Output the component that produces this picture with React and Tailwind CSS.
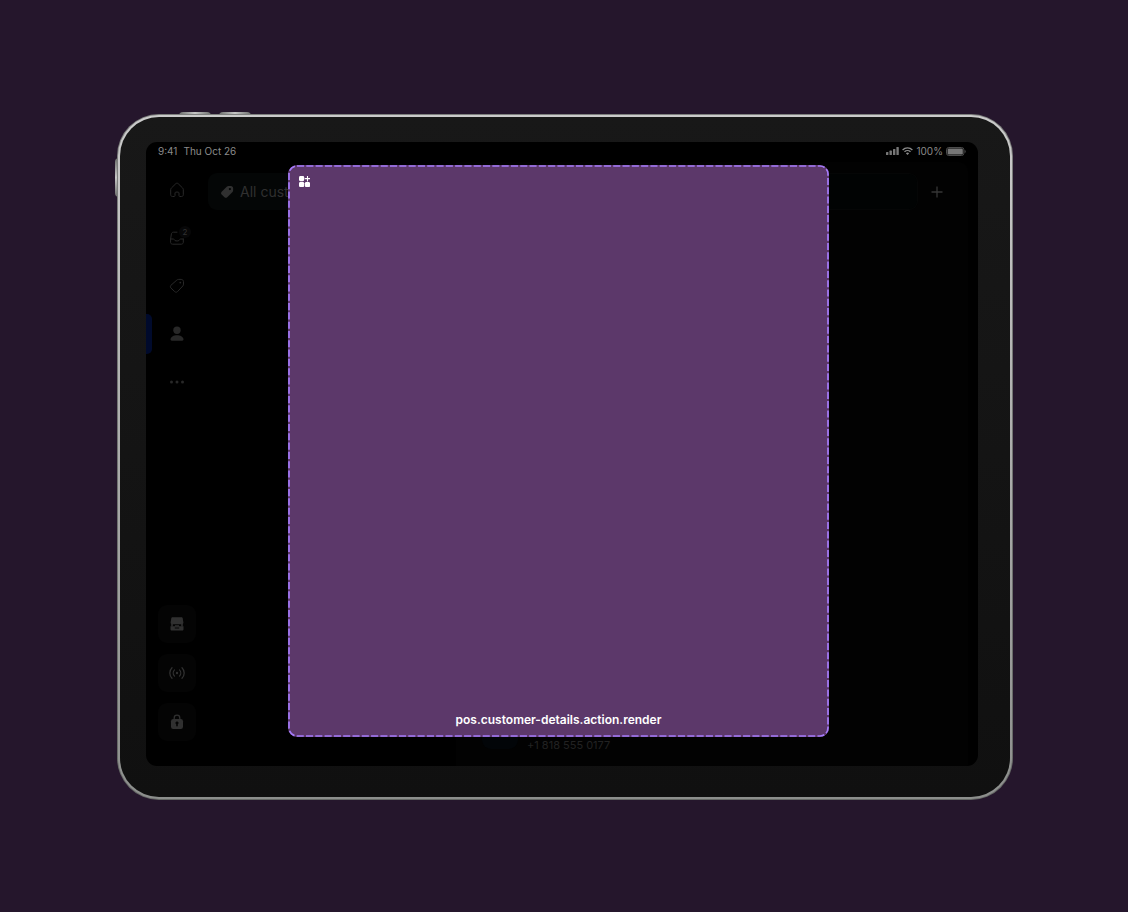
// PURPOSE:
// Shows where the customer details modal extension renders
// on top of the point of sale app, inside a tablet frame.

const navItems = [
  { label: "Home", icon: <HomeIcon /> },
  { label: "Orders", icon: <InboxIcon />, badge: "2" },
  { label: "Products", icon: <TagIcon /> },
  { label: "Customers", icon: <PersonIcon />, active: true },
  { label: "More", icon: <DotsIcon /> },
];

const toolItems = [
  { label: "Register", icon: <RegisterIcon /> },
  { label: "Connectivity", icon: <SignalIcon /> },
  { label: "Lock", icon: <LockIcon /> },
];

export default function App() {
  return (
    <div className="flex min-h-screen bg-[#25162c] pt-[114px] pr-[115px] pb-[112px] pl-[117px] font-['Inter','Liberation_Sans',sans-serif]">
      {/* ================= DEVICE FRAME ================= */}
      <div className="relative flex min-w-0 flex-1">
        {/* Hardware buttons */}
        <div className="absolute -top-0.5 left-[62px] h-1 w-8 rounded-t-sm bg-linear-to-r from-[#6d6f6d] via-[#c6c6c6] to-[#6d6f6d]" />
        <div className="absolute -top-0.5 left-[102px] h-1 w-8 rounded-t-sm bg-linear-to-r from-[#6d6f6d] via-[#c6c6c6] to-[#6d6f6d]" />
        <div className="absolute top-[44px] -left-0.5 h-[39px] w-1 rounded-l-sm bg-linear-to-b from-[#6d6f6d] via-[#c6c6c6] to-[#6d6f6d]" />

        <div className="relative flex min-w-0 flex-1 rounded-[42px] bg-linear-to-b from-[#7d7f7d] to-[#656865] p-px">
          <div className="flex min-w-0 flex-1 rounded-[41px] bg-linear-to-b from-[#cbcbcb] to-[#8d8f8d] p-0.5">
            <div className="flex min-w-0 flex-1 rounded-[39px] bg-linear-to-b from-[#181818] to-[#101010] pt-[25px] pr-8 pb-[31px] pl-[26px]">
              <Screen />
            </div>
          </div>
        </div>
      </div>
    </div>
  );
}

function Screen() {
  return (
    <div className="relative flex min-w-0 flex-1 flex-col overflow-hidden rounded-[11px] bg-black">
      <StatusBar />
      <div className="flex flex-1">
        <Sidebar />
        <Customers />
      </div>
      <ExtensionModal />
    </div>
  );
}

function StatusBar() {
  return (
    <header className="flex h-5 items-start justify-between px-3 text-[10px] leading-[18px] text-[#8a8a8a]">
      <div className="flex gap-1.5">
        <span>9:41</span>
        <span>Thu Oct 26</span>
      </div>
      <div className="flex items-center gap-[3px]">
        <svg width="13" height="8" viewBox="0 0 13 8" fill="#777">
          <rect x="0" y="5" width="2.4" height="3" rx=".6" />
          <rect x="3.5" y="3.6" width="2.4" height="4.4" rx=".6" />
          <rect x="7" y="2" width="2.4" height="6" rx=".6" />
          <rect x="10.4" y="0" width="2.4" height="8" rx=".6" />
        </svg>
        <svg width="11" height="8" viewBox="0 0 11 8" fill="none" stroke="#8a8a8a" strokeWidth="1.4">
          <path d="M.6 2.9a7 7 0 0 1 9.8 0M2.5 4.8a4.3 4.3 0 0 1 6 0" />
          <path d="M5.5 8 3.9 6.3a2.3 2.3 0 0 1 3.2 0z" fill="#8a8a8a" stroke="none" />
        </svg>
        <span>100%</span>
        <svg width="20" height="9" viewBox="0 0 20 9">
          <rect x=".5" y=".5" width="17.4" height="8" rx="2.3" fill="none" stroke="#4c4c4c" />
          <rect x="1.6" y="1.6" width="15.2" height="5.8" rx="1.2" fill="#777" />
          <path d="M18.7 3v3c.6-.2 1-.8 1-1.5s-.4-1.3-1-1.5z" fill="#4c4c4c" />
        </svg>
      </div>
    </header>
  );
}

function Sidebar() {
  return (
    <nav className="flex w-[62px] flex-col items-center justify-between pt-1 pb-[25px]">
      <div className="flex w-full flex-col">
        {navItems.map((item) => (
          <button
            key={item.label}
            type="button"
            aria-label={item.label}
            className="relative flex h-12 items-center justify-center text-[#282828]"
          >
            {item.active && (
              <span className="absolute top-1 left-0 h-10 w-1.5 rounded-r-[5px] bg-[#000a2c]" />
            )}
            {item.icon}
            {item.badge && (
              <span className="absolute top-3 right-[17px] flex size-3 items-center justify-center rounded-full bg-[#070708] text-[8px] text-[#323232]">
                {item.badge}
              </span>
            )}
          </button>
        ))}
      </div>

      <div className="flex flex-col gap-[11px]">
        {toolItems.map((item) => (
          <button
            key={item.label}
            type="button"
            aria-label={item.label}
            className="flex size-[38px] items-center justify-center rounded-[9px] bg-[#040404] text-[#303030]"
          >
            {item.icon}
          </button>
        ))}
      </div>
    </nav>
  );
}

function Customers() {
  return (
    <main className="mr-2.5 flex min-w-0 flex-1">
      {/* Customer list */}
      <div className="w-[248px] pt-[11px]">
        <button
          type="button"
          className="flex h-[37px] w-full items-center gap-1.5 rounded-l-[9px] bg-[#040606] pl-3 text-sm text-[#303030]"
        >
          <TagSolidIcon />
          All customers
        </button>
      </div>

      {/* Customer details */}
      <section className="flex min-w-0 flex-1 flex-col justify-between rounded-tr-[9px] bg-[#020202] pt-[11px]">
        <div className="flex items-center">
          <div className="h-[37px] flex-1 rounded-r-[9px] border border-l-0 border-[#050606] bg-[#010303]" />
          <button type="button" aria-label="Add customer" className="flex h-9 w-[50px] items-center justify-center pr-3 text-[#363636]">
            <svg width="12" height="12" viewBox="0 0 12 12" stroke="currentColor" strokeWidth="1.3">
              <path d="M6 .5v11M.5 6h11" />
            </svg>
          </button>
        </div>
        <div className="flex items-end gap-[9px] pb-3 pl-[26px]">
          <div className="mb-[5px] size-9 rounded-[9px] bg-[#020508]" />
          <p className="text-[11px] leading-[18px] text-[#222]">+1 818 555 0177</p>
        </div>
      </section>
    </main>
  );
}

/* ================= EXTENSION MODAL ================= */
function ExtensionModal() {
  return (
    <div className="absolute top-[23px] right-[149px] bottom-[29px] left-[142px] flex flex-col justify-between rounded-[9px] bg-[#5c386a] px-[11px] pt-[11px] pb-2">
      <svg className="absolute inset-0 size-full">
        <rect
          className="h-[calc(100%-2px)] w-[calc(100%-2px)]"
          x="1"
          y="1"
          rx="8"
          fill="none"
          stroke="#a57bfa"
          strokeWidth="1.7"
          strokeDasharray="7.1 2.2"
        />
      </svg>
      <svg width="11" height="11" viewBox="0 0 11 11" fill="#fff">
        <rect x="0" y="0" width="5.2" height="5.2" rx="1.4" />
        <rect x="0" y="5.9" width="5.2" height="5.2" rx="1.4" />
        <rect x="5.9" y="5.9" width="5.2" height="5.2" rx="1.4" />
        <path d="M8.5 .2v4.800M6.100 2.600h4.800" stroke="#fff" strokeWidth="1.1" strokeLinecap="round" />
      </svg>
      <p className="text-center text-xs leading-[18px] font-semibold text-white">
        pos.customer-details.action.render
      </p>
    </div>
  );
}

/* ================= ICONS ================= */
function HomeIcon() {
  return (
    <svg width="16" height="16" viewBox="0 0 16 16" fill="none" stroke="currentColor" strokeWidth="1" strokeLinejoin="round">
      <path d="M1.7 7.7c0-.7.3-1.3.8-1.8l4.3-4.2c.7-.7 1.7-.7 2.4 0l4.3 4.200c.5.5.8 1.100.8 1.800v5.100c0 .9-.7 1.700-1.700 1.700h-1.800c-.5 0-.8-.4-.8-.8V11c0-.5-.4-.9-.9-.9H6.900c-.5 0-.9.4-.9.9v2.700c0 .4-.3.8-.8.8H3.400c-1 0-1.700-.8-1.700-1.700z" />
    </svg>
  );
}

function InboxIcon() {
  return (
    <svg width="16" height="16" viewBox="0 0 16 16" fill="none" stroke="currentColor" strokeWidth="1" strokeLinecap="round" strokeLinejoin="round">
      <path d="M8 2.200H4.400c-1.100 0-1.900.8-2 1.800L1.600 9v3.300c0 1 .8 1.900 1.900 1.900h8.900c1.100 0 1.900-.9 1.900-1.900V9" />
      <path d="M1.600 9h2.700c.5 0 .9.300 1.100.7.300.8.9 1.200 1.600 1.200h1.900c.7 0 1.300-.4 1.600-1.200.2-.4.6-.7 1.100-.7h2.700" />
    </svg>
  );
}

function TagIcon() {
  return (
    <svg width="16" height="16" viewBox="0 0 16 16" fill="none" stroke="currentColor" strokeWidth="1" strokeLinejoin="round">
      <path d="M7.800 2.100c.6-.5 1.200-.7 1.900-.7h2.500c1.300 0 2.300 1 2.300 2.300v2.400c0 .7-.2 1.400-.7 1.900l-5.300 5.600c-.8.8-2 .8-2.800 0L1.900 10c-.7-.8-.7-2 0-2.700z" />
      <circle cx="11.300" cy="4.600" r=".9" fill="currentColor" stroke="none" />
    </svg>
  );
}

function TagSolidIcon() {
  return (
    <svg width="14" height="14" viewBox="0 0 16 16" fill="currentColor">
      <path
        fillRule="evenodd"
        d="M8 1.700c.5-.5 1.100-.7 1.800-.7h2.700C13.900 1 15 2.100 15 3.500v2.700c0 .7-.2 1.300-.7 1.800l-6 6c-.9.9-2.300.9-3.200 0L1.900 10.900c-.9-.9-.9-2.300 0-3.200zM11.300 6a1.300 1.300 0 1 0 0-2.600 1.300 1.300 0 0 0 0 2.600z"
      />
    </svg>
  );
}

function PersonIcon() {
  return (
    <svg width="16" height="16" viewBox="0 0 16 16" fill="currentColor">
      <circle cx="8" cy="4.200" r="3.700" />
      <path d="M1.500 13.300C1.900 10.800 4.700 9.300 8 9.300s6.100 1.500 6.500 4c.1.800-.5 1.400-1.300 1.400H2.800c-.8 0-1.400-.6-1.300-1.400z" />
    </svg>
  );
}

function DotsIcon() {
  return (
    <svg width="16" height="16" viewBox="0 0 16 16" fill="currentColor">
      <circle cx="2.500" cy="8" r="1.500" />
      <circle cx="8" cy="8" r="1.500" />
      <circle cx="13.500" cy="8" r="1.500" />
    </svg>
  );
}

function RegisterIcon() {
  return (
    <svg width="16" height="16" viewBox="0 0 16 16" fill="currentColor">
      <path d="M3.600 1.200h8.800c.7 0 1.200.4 1.300 1l.7 4.300c.1 1-.7 1.800-1.700 1.800H3.300c-1 0-1.800-.8-1.700-1.800l.7-4.300c.1-.6.600-1 1.300-1z" />
      <path d="M2.200 7.500h1.600v3H2.200zM12.200 7.500h1.600v3h-1.600zM6 9.200h4v1.300H6z" />
      <path fillRule="evenodd" d="M1.500 10.200h13v3c0 .7-.5 1.300-1.300 1.300H2.800c-.8 0-1.300-.6-1.300-1.300zm4.300 1.200v1h4.400v-1z" />
    </svg>
  );
}

function SignalIcon() {
  return (
    <svg width="16" height="16" viewBox="0 0 16 16" fill="none" stroke="currentColor" strokeWidth="1.300" strokeLinecap="round">
      <path d="M3 2.700a7.500 7.500 0 0 0 0 10.600M13 2.700a7.500 7.500 0 0 1 0 10.600M5.500 4.900a4.500 4.500 0 0 0 0 6.200M10.500 4.900a4.500 4.500 0 0 1 0 6.200" />
      <circle cx="8" cy="8" r="1.200" fill="currentColor" stroke="none" />
    </svg>
  );
}

function LockIcon() {
  return (
    <svg width="16" height="16" viewBox="0 0 16 16">
      <path d="M5.200 6V3.900a2.800 2.800 0 0 1 5.600 0V6" fill="none" stroke="currentColor" strokeWidth="1.300" />
      <rect x="2" y="5" width="12" height="10" rx="2.200" fill="currentColor" />
      <path d="M8 7.500a1.500 1.500 0 0 1 .8 2.800v1.500c0 .4-.4.8-.8.8s-.8-.4-.8-.8v-1.500A1.500 1.500 0 0 1 8 7.500z" fill="#040404" />
    </svg>
  );
}
